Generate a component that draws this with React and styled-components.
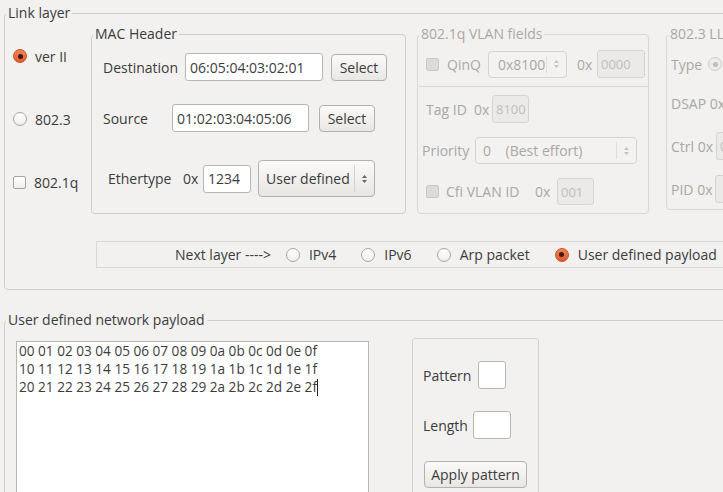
import React from "react";
import styled, { createGlobalStyle } from "styled-components";

const TEXT = "#3c3c3c";
const DIS = "#aaa7a3";

const GlobalStyle = createGlobalStyle`
  html, body { margin: 0; padding: 0; background: #f2f1f0; overflow: hidden; }
  body { font-family: "Open Sans", "Noto Sans", sans-serif; font-size: 14px; color: ${TEXT}; }
  * { box-sizing: border-box; }
`;

const Page = styled.div`
  width: 723px;
  height: 492px;
  overflow: hidden;
  padding: 5px 0 0 4px;
  display: flex;
  flex-direction: column;
`;

const Group = styled.fieldset`
  margin: 0;
  padding: 0;
  min-width: 0;
  flex: none;
  border: 1px solid ${(p) => (p.$disabled ? "#d9d7d3" : "#cfcdc9")};
  border-radius: 4px;
  color: ${(p) => (p.$disabled ? DIS : "inherit")};
  width: ${(p) => p.$w}px;
  height: ${(p) => (p.$h ? `${p.$h}px` : "auto")};
  margin-top: ${(p) => p.$mt || 0}px;
  margin-left: ${(p) => p.$ml || 0}px;
`;

const Legend = styled.legend`
  padding: 0 2px;
  margin-left: 1px;
  line-height: 16px;
  white-space: nowrap;
`;

const LinkBody = styled.div`
  display: flex;
  flex-direction: column;
  padding: 5px 0 21px 0;
`;

const TopRow = styled.div`
  display: flex;
  align-items: flex-start;
`;

const LeftCol = styled.div`
  width: 86px;
  flex: none;
  display: flex;
  flex-direction: column;
  padding: 22px 0 0 8px;
  gap: 47px;
`;

const Option = styled.label`
  display: flex;
  align-items: center;
  height: 16px;
  gap: ${(p) => p.$gap ?? 8}px;
  white-space: nowrap;
  margin-left: ${(p) => p.$ml || 0}px;
`;

const RadioDot = styled.span`
  width: 14px;
  height: 14px;
  flex: none;
  border-radius: 50%;
  position: relative;
  border: 1px solid ${(p) => (p.$checked ? "#c4532c" : p.$disabled ? "#cfcdc9" : "#a8a5a0")};
  background: ${(p) =>
    p.$checked
      ? "linear-gradient(#f28558, #e05a2b)"
      : p.$disabled
      ? "#ecebe9"
      : "linear-gradient(#ffffff, #efeeec)"};
  &::after {
    content: "";
    display: ${(p) => (p.$checked || p.$dot ? "block" : "none")};
    position: absolute;
    left: 50%;
    top: 50%;
    width: 5px;
    height: 5px;
    margin: -2.5px 0 0 -2.5px;
    border-radius: 50%;
    background: ${(p) => (p.$checked ? "#3b1d12" : "#c2bfbb")};
  }
`;

const CheckBox = styled.span`
  width: 13px;
  height: 13px;
  flex: none;
  border-radius: 2px;
  border: 1px solid ${(p) => (p.$disabled ? "#cac8c4" : "#a8a5a0")};
  background: ${(p) => (p.$disabled ? "#dddbd8" : "linear-gradient(#ffffff, #efeeec)")};
`;

const Rows = styled.div`
  display: flex;
  flex-direction: column;
  padding-top: ${(p) => p.$pt || 0}px;
`;

const Row = styled.div`
  display: flex;
  align-items: center;
  height: ${(p) => p.$h || 28}px;
  padding-left: ${(p) => p.$indent || 0}px;
  margin-top: ${(p) => p.$mt || 0}px;
  white-space: nowrap;
`;

const Label = styled.span`
  flex: none;
  width: ${(p) => (p.$w ? `${p.$w}px` : "auto")};
  margin-right: ${(p) => p.$mr || 0}px;
  margin-left: ${(p) => p.$ml || 0}px;
  white-space: nowrap;
`;

const Field = styled.input`
  flex: none;
  width: ${(p) => p.$w}px;
  height: ${(p) => p.$h || 28}px;
  margin-left: ${(p) => p.$ml || 0}px;
  border: 1px solid ${(p) => (p.disabled ? "#d6d4d0" : "#b9b6b1")};
  border-radius: 3px;
  background: ${(p) => (p.disabled ? "#ebeae8" : "#ffffff")};
  color: ${(p) => (p.disabled ? "#c2bfbb" : TEXT)};
  font: inherit;
  font-size: ${(p) => (p.disabled ? 13 : 14)}px;
  padding: 0 0 0 ${(p) => (p.disabled ? 3 : 4)}px;
  outline: none;
  &:disabled { -webkit-text-fill-color: #c0bdb9; }
`;

const Button = styled.button`
  flex: none;
  width: ${(p) => p.$w}px;
  height: 27px;
  margin-left: ${(p) => p.$ml || 0}px;
  border: 1px solid #b4b1ac;
  border-radius: 4px;
  background: linear-gradient(#fbfaf9, #e9e7e4);
  font: inherit;
  color: ${TEXT};
  padding: 0;
  white-space: nowrap;
`;

const Combo = styled.div`
  flex: none;
  display: flex;
  align-items: center;
  width: ${(p) => p.$w}px;
  height: ${(p) => p.$h || 27}px;
  margin-left: ${(p) => p.$ml || 0}px;
  border: 1px solid ${(p) => (p.$disabled ? "#d6d4d0" : "#b4b1ac")};
  border-radius: 4px;
  background: ${(p) => (p.$disabled ? "#f3f2f1" : "linear-gradient(#fbfaf9, #e8e6e3)")};
  color: ${(p) => (p.$disabled ? DIS : TEXT)};
  padding-left: ${(p) => p.$pl || 8}px;
`;

const ComboText = styled.span`
  flex: 1;
  white-space: pre;
`;

const ComboSep = styled.span`
  width: 1px;
  align-self: stretch;
  margin: 4px 0;
  background: ${(p) => (p.$disabled ? "#e0dedb" : "#d3d1cd")};
`;

const ArrowBox = styled.span`
  width: 19px;
  display: flex;
  justify-content: center;
  align-items: center;
`;

const Arrows = ({ disabled }) => (
  <svg width="7" height="12" viewBox="0 0 7 12">
    <path d="M1 5 L3.5 2 L6 5 Z M1 7 L3.5 10 L6 7 Z" fill={disabled ? "#c4c1bd" : "#6b6864"} />
  </svg>
);

const QinQBar = styled.div`
  display: flex;
  align-items: center;
  height: 45px;
  padding-left: 8px;
  border-bottom: 1px solid #d9d7d3;
  white-space: nowrap;
`;

const NextBar = styled.div`
  display: flex;
  align-items: center;
  width: 700px;
  height: 27px;
  margin: 27px 0 0 91px;
  padding-left: 78px;
  border: 1px solid #d9d7d4;
  white-space: nowrap;
`;

const PayloadBody = styled.div`
  display: flex;
  align-items: flex-start;
  padding-left: 11px;
`;

const HexArea = styled.div`
  flex: none;
  width: 353px;
  height: 200px;
  margin-top: 13px;
  background: #ffffff;
  border: 1px solid #b9b6b1;
  padding: 0 0 0 2px;
  line-height: 18px;
  font-size: 13.6px;
  white-space: pre;
`;

const Caret = styled.span`
  display: inline-block;
  width: 1px;
  height: 17px;
  background: #222;
  vertical-align: -4px;
`;

const Frame = styled.div`
  flex: none;
  width: 127px;
  height: 200px;
  margin: 10px 0 0 43px;
  border: 1px solid #d3d1cd;
  border-radius: 3px;
  padding: 22px 0 0 10px;
  display: flex;
  flex-direction: column;
  align-items: flex-start;
`;

const hexLines = [
  "00 01 02 03 04 05 06 07 08 09 0a 0b 0c 0d 0e 0f",
  "10 11 12 13 14 15 16 17 18 19 1a 1b 1c 1d 1e 1f",
  "20 21 22 23 24 25 26 27 28 29 2a 2b 2c 2d 2e 2f",
];

const nextOptions = [
  { label: "IPv4", gapBefore: 15 },
  { label: "IPv6", gapBefore: 25 },
  { label: "Arp packet", gapBefore: 25 },
  { label: "User defined payload", gapBefore: 25, checked: true },
];

export default function App() {
  return (
    <>
      <GlobalStyle />
      <Page>
        <Group $w={760}>
          <Legend>Link layer</Legend>
          <LinkBody>
            <TopRow>
              <LeftCol>
                <Option>
                  <RadioDot $checked />
                  ver II
                </Option>
                <Option>
                  <RadioDot />
                  802.3
                </Option>
                <Option>
                  <CheckBox />
                  802.1q
                </Option>
              </LeftCol>

              <Group $w={315} $h={188}>
                <Legend>MAC Header</Legend>
                <Rows $pt={11}>
                  <Row $indent={11}>
                    <Label $w={82}>Destination</Label>
                    <Field $w={138} defaultValue="06:05:04:03:02:01" readOnly />
                    <Button $w={56} $ml={8}>Select</Button>
                  </Row>
                  <Row $indent={11} $mt={23}>
                    <Label $w={69}>Source</Label>
                    <Field $w={137} defaultValue="01:02:03:04:05:06" readOnly />
                    <Button $w={56} $ml={10}>Select</Button>
                  </Row>
                  <Row $indent={16} $mt={28} $h={37}>
                    <Label $w={75}>Ethertype</Label>
                    <Label $w={20}>0x</Label>
                    <Field $w={48} defaultValue="1234" readOnly />
                    <Combo $w={117} $h={37} $ml={7} $pl={7}>
                      <ComboText>User defined</ComboText>
                      <ComboSep />
                      <ArrowBox>
                        <Arrows />
                      </ArrowBox>
                    </Combo>
                  </Row>
                </Rows>
              </Group>

              <Group $w={232} $h={188} $ml={11} $disabled>
                <Legend>802.1q VLAN fields</Legend>
                <QinQBar>
                  <CheckBox $disabled />
                  <Label $ml={8} $w={41}>QinQ</Label>
                  <Combo $w={79} $disabled $pl={9}>
                    <ComboText>0x8100</ComboText>
                    <ComboSep $disabled />
                    <ArrowBox>
                      <Arrows disabled />
                    </ArrowBox>
                  </Combo>
                  <Label $w={20} $ml={10}>0x</Label>
                  <Field $w={48} disabled defaultValue="0000" />
                </QinQBar>
                <Rows>
                  <Row $indent={8} $mt={8}>
                    <Label $w={66}>Tag ID&nbsp;&nbsp;0x</Label>
                    <Field $w={37} disabled defaultValue="8100" />
                  </Row>
                  <Row $indent={4} $mt={14} $h={27}>
                    <Label $w={53}>Priority</Label>
                    <Combo $w={162} $disabled $pl={7}>
                      <ComboText>{"0    (Best effort)"}</ComboText>
                      <ComboSep $disabled />
                      <ArrowBox>
                        <Arrows disabled />
                      </ArrowBox>
                    </Combo>
                  </Row>
                  <Row $indent={8} $mt={14} $h={27}>
                    <CheckBox $disabled />
                    <Label $ml={7} $w={89}>Cfi VLAN ID</Label>
                    <Label $w={22}>0x</Label>
                    <Field $w={37} $h={27} disabled defaultValue="001" />
                  </Row>
                </Rows>
              </Group>

              <Group $w={120} $h={184} $ml={17} $disabled>
                <Legend>802.3 LLC</Legend>
                <Rows>
                  <Row $indent={4} $mt={8}>
                    <Label $w={37}>Type</Label>
                    <RadioDot $disabled $dot />
                  </Row>
                  <Row $indent={4} $mt={11}>
                    <Label $w={56}>DSAP 0x</Label>
                    <Field $w={40} disabled defaultValue="" />
                  </Row>
                  <Row $indent={4} $mt={15}>
                    <Label $w={45}>Ctrl 0x</Label>
                    <Field $w={40} disabled defaultValue="00" />
                  </Row>
                  <Row $indent={4} $mt={15}>
                    <Label $w={44}>PID 0x</Label>
                    <Field $w={40} disabled defaultValue="" />
                  </Row>
                </Rows>
              </Group>
            </TopRow>

            <NextBar>
              <Label>Next layer ----&gt;</Label>
              {nextOptions.map((o) => (
                <Option key={o.label} $ml={o.gapBefore} $gap={9}>
                  <RadioDot $checked={o.checked} />
                  {o.label}
                </Option>
              ))}
            </NextBar>
          </LinkBody>
        </Group>

        <Group $w={760} $h={200} $mt={22}>
          <Legend>User defined network payload</Legend>
          <PayloadBody>
            <HexArea>
              {hexLines[0]}
              {"\n"}
              {hexLines[1]}
              {"\n"}
              {hexLines[2]}
              <Caret />
            </HexArea>
            <Frame>
              <Row>
                <Label $w={55}>Pattern</Label>
                <Field $w={28} defaultValue="" readOnly />
              </Row>
              <Row $mt={22}>
                <Label $w={50}>Length</Label>
                <Field $w={38} defaultValue="" readOnly />
              </Row>
              <Row $mt={22} $h={27}>
                <Button $w={103} $ml={1}>Apply pattern</Button>
              </Row>
            </Frame>
          </PayloadBody>
        </Group>
      </Page>
    </>
  );
}
